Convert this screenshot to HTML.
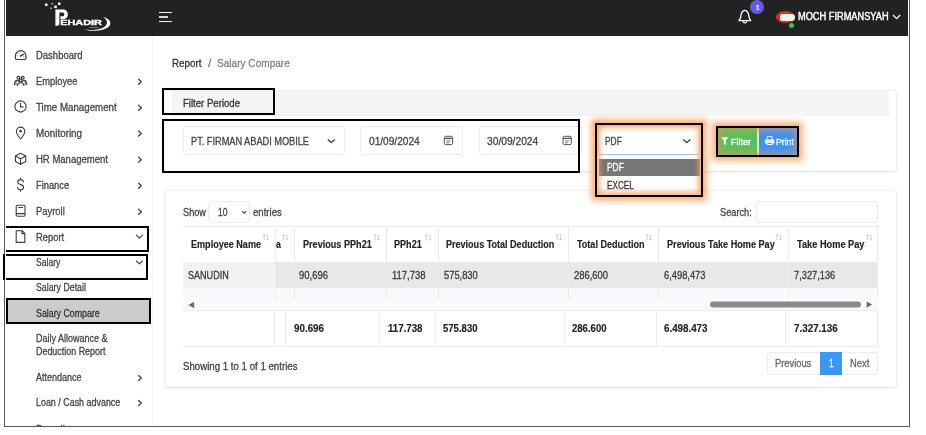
<!DOCTYPE html>
<html lang="en">
<head>
<meta charset="utf-8">
<title>Report - Salary Compare</title>
<style>
html,body{margin:0;padding:0;background:#fff;}
body{width:926px;height:435px;overflow:hidden;position:relative;font-family:"Liberation Sans",sans-serif;}
#app{position:absolute;left:0;top:0;width:926px;height:435px;overflow:hidden;will-change:transform;}
#app>*{position:absolute;box-sizing:border-box;}
.t{white-space:nowrap;height:16px;line-height:16px;transform-origin:0 50%;-webkit-text-stroke:0.28px currentColor;}
.abs{position:absolute;box-sizing:border-box;}
#app>#frame{position:absolute;left:4px;top:-1px;width:906px;height:428px;box-sizing:border-box;border:1px solid #5a5a5a;border-top:none;pointer-events:none;}
.cover{background:#fff;}
.topbar{left:6px;top:0;width:902px;height:36px;background:#222;}
.sidebar-line{left:152px;top:36px;width:1px;height:390px;background:#f4f4f4;}
.card{background:#fff;border:1px solid #f1f1f3;border-bottom-color:#e9e9ec;border-radius:3px;box-shadow:0 1px 2px rgba(0,0,0,.05);}
.inp{background:#fff;border:1px solid #ededf0;border-radius:3px;}
.hl{border:2px solid #000;}
.glow{box-shadow:0 0 6px 4px rgba(250,160,95,.82), inset 0 0 4px 4px rgba(235,145,90,.5);}
.vline{background:#ececec;width:1px;}
.hline{background:#ececec;height:1px;}
svg{position:absolute;overflow:visible;}
.glow2{box-shadow:0 0 6px 4px rgba(250,160,95,.82), inset 0 0 5px 3px rgba(248,155,90,.8);}

</style>
</head>
<body>
<div id="app">
<!-- ======= top bar ======= -->
<div class="topbar"></div>
<!-- logo -->
<svg style="left:0;top:0" width="160" height="36" viewBox="0 0 160 36">
  <g fill="#fff">
    <rect x="45" y="3.5" width="2.5" height="2.5"/>
    <rect x="51.4" y="2.8" width="1.7" height="1.7" opacity=".6"/>
    <rect x="58" y="2.5" width="2.5" height="2.5"/>
    <rect x="50.2" y="7.4" width="1.7" height="1.7" opacity=".6"/>
    <rect x="54.3" y="5.6" width="2.5" height="2.5"/>
    <path d="M55.4 9.5 H62.6 C66.2 9.5 67.8 11.6 67.8 14.4 C67.8 17.4 65.8 19.2 62.2 19.2 H60.4 V16.3 H61.8 C63.5 16.3 64.3 15.6 64.3 14.4 C64.3 13.1 63.5 12.5 61.8 12.5 H59.4 V23.2 C59.4 25 58.2 26 55.4 26 Z"/>
    <text x="60.2" y="25.1" font-family="Liberation Sans, sans-serif" font-weight="700" font-size="7.4" textLength="41.8" lengthAdjust="spacingAndGlyphs" stroke="#fff" stroke-width=".35">EHADIR</text>
    <path d="M103 16.8 C109 18.5 112.5 22.5 109 26.5 C105 30.8 92 32 84 29.6 C92 30.8 101.5 29.8 105.5 26 C108.3 23.2 107 19.5 103 16.8 Z"/>
    <rect x="89" y="27" width="10" height="0.8" opacity=".45"/>
  </g>
</svg>
<!-- hamburger -->
<div class="abs" style="left:158.7px;top:11.8px;width:13.5px;height:1.3px;background:#f2f2f2"></div>
<div class="abs" style="left:158.7px;top:16.2px;width:9.6px;height:1.6px;background:#d6d6d6"></div>
<div class="abs" style="left:158.7px;top:20.9px;width:13.5px;height:1.3px;background:#f2f2f2"></div>
<!-- bell -->
<svg style="left:736px;top:8px" width="18" height="17" viewBox="736 8 18 17">
  <path d="M739 20.6 C741.2 18.6 740.6 15.6 741.4 13.4 C742 11.5 743.2 10.3 744.85 10.3 C746.5 10.3 747.7 11.5 748.3 13.4 C749.1 15.6 748.5 18.6 750.7 20.6 Z" fill="none" stroke="#fff" stroke-width="1.3" stroke-linejoin="round"/>
  <path d="M743 21.4 C743.4 23.4 746.3 23.4 746.7 21.4" fill="none" stroke="#fff" stroke-width="1.3"/>
</svg>
<div class="abs" style="left:750.1px;top:0.2px;width:13.8px;height:13.8px;border-radius:50%;background:#645ae6"></div>
<!-- avatar -->
<div class="abs" style="left:775.8px;top:11px;width:18.8px;height:11.6px;border-radius:50%;background:#dd2a22"></div>
<div class="abs" style="left:779.5px;top:13.6px;width:15px;height:7.2px;border-radius:2px 4px 4px 2px;background:#f4f1f1"></div>
<div class="abs" style="left:788.3px;top:21.6px;width:7px;height:7px;border-radius:50%;background:#3fc253;border:1px solid #222"></div>
<!-- user chevron -->
<svg style="left:892px;top:13px" width="10" height="8" viewBox="0 0 10 8"><path d="M1 2 L4.6 5.6 L8.2 2" fill="none" stroke="#fff" stroke-width="1.2"/></svg>

<!-- ======= sidebar ======= -->
<div class="sidebar-line"></div>
<div class="abs" style="left:6px;top:298px;width:145px;height:26px;background:#cbcbcb"></div>
<!-- sidebar icons -->
<svg style="left:0;top:0" width="160" height="435" viewBox="0 0 160 435" fill="none" stroke="#3d3d3d" stroke-width="1.1" stroke-linecap="round" stroke-linejoin="round">
  <!-- dashboard gauge -->
  <path d="M15.4 56 A5.3 5.3 0 0 1 26 56 V57.9 Q26 59.5 24.4 59.5 H17 Q15.4 59.5 15.4 57.9 Z" stroke-width="1.2"/>
  <path d="M20.7 55.9 L23.5 54.4" stroke-width="1.3"/><circle cx="20.6" cy="55.9" r=".8" fill="#3d3d3d" stroke="none"/>
  <path d="M17.2 55.8 H17.9 M18.2 53.2 L18.7 53.7 M20.7 52.1 V52.8 M24.1 56.6 H23.5" stroke-width=".6" stroke="#777"/>
  <!-- employee (3 people) -->
  <circle cx="18.5" cy="77.7" r="1.4" stroke-width="1.2"/><circle cx="22.7" cy="77.7" r="1.4" stroke-width="1.2"/>
  <path d="M14.4 84.6 C14.6 81.4 15.6 80.4 17 80.4 C18.2 80.4 18.8 81 19 82"/>
  <path d="M26.8 84.6 C26.6 81.4 25.6 80.4 24.2 80.4 C23 80.4 22.4 81 22.2 82"/>
  <circle cx="20.6" cy="80.6" r="1.3"/>
  <path d="M17.4 85.4 C17.6 83.4 18.8 82.8 20.6 82.8 C22.4 82.8 23.6 83.4 23.8 85.4"/>
  <path d="M16 81 L16 84.8 M25.2 81 L25.2 84.8" stroke-width=".9"/>
  <!-- clock -->
  <circle cx="20.5" cy="106.5" r="5.6"/>
  <path d="M20.5 103.4 V106.9 H23"/>
  <!-- pin -->
  <path d="M20.6 139 C17.4 135.4 16.4 133.5 16.4 131.3 A4.2 4.2 0 0 1 24.8 131.3 C24.8 133.5 23.8 135.4 20.6 139 Z"/>
  <circle cx="20.6" cy="131.2" r=".8" fill="#3d3d3d"/>
  <!-- cube -->
  <path d="M20.55 153.2 L25.7 156 V161.6 L20.55 164.3 L15.4 161.6 V156 Z"/>
  <path d="M15.4 156 L20.55 158.8 L25.7 156 M20.55 158.8 V164.3"/>
  <!-- dollar -->
  <path d="M23.4 182 C23.2 180.4 22 179.6 20.5 179.6 C18.8 179.6 17.7 180.6 17.7 182 C17.7 185.4 23.6 183.8 23.6 187.2 C23.6 188.8 22.3 189.7 20.6 189.7 C18.8 189.7 17.6 188.8 17.5 187.2 M20.55 178 V179.6 M20.55 189.7 V191.2"/>
  <!-- payroll -->
  <rect x="16.2" y="205.2" width="8.8" height="11" rx="1.2"/>
  <path d="M18.6 207.5 H22.6 M16.4 213.6 H24.8"/>
  <!-- report file -->
  <path d="M16.2 230.7 H22.2 L24.8 233.4 V242.4 H16.2 Z M22 230.8 V233.6 H24.7"/>
  <!-- chevrons right -->
  <g stroke="#444" stroke-width="1.4">
    <path d="M138.6 79.2 L141.3 81.7 L138.6 84.2"/>
    <path d="M138.6 105.2 L141.3 107.7 L138.6 110.2"/>
    <path d="M138.6 131.1 L141.3 133.6 L138.6 136.1"/>
    <path d="M138.6 157.2 L141.3 159.7 L138.6 162.2"/>
    <path d="M138.6 183.2 L141.3 185.7 L138.6 188.2"/>
    <path d="M138.6 209.2 L141.3 211.7 L138.6 214.2"/>
    <path d="M138.6 375.6 L141.3 378.1 L138.6 380.6"/>
    <path d="M138.6 400.6 L141.3 403.1 L138.6 405.6"/>
    <!-- chevrons down -->
    <path d="M136.4 235.2 L139.4 238.1 L142.4 235.2" stroke-width="1.15"/>
    <path d="M136.4 261 L139.4 263.9 L142.4 261" stroke-width="1.15"/>
  </g>
</svg>

<!-- ======= main: card 1 ======= -->
<div class="card" style="left:164px;top:90px;width:733px;height:82px"></div>
<div class="abs" style="left:172px;top:90.5px;width:716.5px;height:25px;background:#f5f5f5"></div>
<div class="inp" style="left:182.5px;top:126px;width:162px;height:29px"></div>
<div class="inp" style="left:360px;top:126px;width:103px;height:29px"></div>
<div class="inp" style="left:478.8px;top:126px;width:103px;height:29px"></div>
<div class="inp" style="left:598px;top:126px;width:101.8px;height:29px;border-color:#e4e8f0;border-bottom-color:#9fc3f5"></div>
<!-- dropdown list -->
<div class="abs" style="left:598.8px;top:158.7px;width:100.8px;height:31.5px;background:#fff"></div>
<div class="abs" style="left:598.8px;top:158.7px;width:100.8px;height:17px;background:#767676"></div>
<!-- select chevrons + calendar icons -->
<svg style="left:0;top:0" width="926" height="435" viewBox="0 0 926 435" fill="none" stroke="#444" stroke-width="1.1">
  <path d="M327.8 139.4 L331.3 142.6 L334.8 139.4" stroke-width="1.3"/>
  <path d="M683.2 139.4 L686.8 142.6 L690.4 139.4" stroke-width="1.3"/>
  <g stroke="#555" stroke-width="1">
    <rect x="444.3" y="136.3" width="8.3" height="8.3" rx="1.3"/><path d="M444.3 138.4 H452.6" stroke-width="1.4"/><path d="M446.3 141 H450.6 M446.3 142.8 H449" stroke-width=".8"/>
    <rect x="563" y="136.3" width="8.3" height="8.3" rx="1.3"/><path d="M563 138.4 H571.3" stroke-width="1.4"/><path d="M565 141 H569.3 M565 142.8 H567.7" stroke-width=".8"/>
  </g>
</svg>
<!-- buttons -->
<div class="abs" style="left:718px;top:128px;width:39.2px;height:27px;background:#58c15d"></div>
<div class="abs" style="left:757.2px;top:128px;width:2.2px;height:27px;background:#fde6d2"></div>
<div class="abs" style="left:759.4px;top:128px;width:37.6px;height:27px;background:#3b93f7"></div>
<svg style="left:0;top:0" width="926" height="435" viewBox="0 0 926 435" fill="#fff" stroke="none">
  <path d="M721.2 137.2 H728.4 L725.8 140.6 V145.2 L723.8 143.8 V140.6 Z"/>
  <path d="M766.8 136.2 H772.4 V139.2 H766.8 Z M767.7 137.1 V139.2 H771.5 V137.1 Z M764.9 139.4 H774.3 V143.4 H772.6 V141.8 H766.6 V143.4 H764.9 Z M766.6 142 H772.6 V145 H766.6 Z M767.6 142.9 V144.1 H771.6 V142.9 Z" fill-rule="evenodd"/>
</svg>

<!-- ======= main: card 2 ======= -->
<div class="card" style="left:164px;top:190px;width:733px;height:198px"></div>
<div class="inp" style="left:208.3px;top:201.3px;width:42.2px;height:21.3px"></div>
<div class="inp" style="left:756px;top:201.3px;width:121.8px;height:21.3px"></div>
<!-- table -->
<div class="abs" style="left:182.5px;top:261.8px;width:92.5px;height:26.3px;background:#f1f1f1"></div>
<div class="abs" style="left:275px;top:261.8px;width:602.8px;height:26.3px;background:#e8e8e8"></div>
<div class="abs" style="left:182.5px;top:288.1px;width:695.3px;height:11px;background:#f8f9fb"></div>
<div class="abs" style="left:182.5px;top:299.1px;width:695.3px;height:11.2px;background:#fafafa"></div>
<div class="abs hline" style="left:182.5px;top:226.2px;width:695.3px"></div>
<div class="abs hline" style="left:182.5px;top:310.3px;width:695.3px"></div>
<div class="abs hline" style="left:182.5px;top:345.6px;width:695.3px"></div>
<!-- header/body column lines -->
<div class="abs vline" style="left:275px;top:226.2px;height:73px"></div>
<div class="abs vline" style="left:294px;top:226.2px;height:73px"></div>
<div class="abs vline" style="left:386px;top:226.2px;height:73px"></div>
<div class="abs vline" style="left:438px;top:226.2px;height:73px"></div>
<div class="abs vline" style="left:568.4px;top:226.2px;height:73px"></div>
<div class="abs vline" style="left:658px;top:226.2px;height:73px"></div>
<div class="abs vline" style="left:788px;top:226.2px;height:73px"></div>
<div class="abs vline" style="left:877.4px;top:226.2px;height:73px"></div>
<!-- footer column lines -->
<div class="abs vline" style="left:273.6px;top:310.3px;height:35.4px"></div>
<div class="abs vline" style="left:285px;top:310.3px;height:35.4px"></div>
<div class="abs vline" style="left:378.6px;top:310.3px;height:35.4px"></div>
<div class="abs vline" style="left:435.4px;top:310.3px;height:35.4px"></div>
<div class="abs vline" style="left:564.4px;top:310.3px;height:35.4px"></div>
<div class="abs vline" style="left:656.2px;top:310.3px;height:35.4px"></div>
<div class="abs vline" style="left:785.2px;top:310.3px;height:35.4px"></div>
<div class="abs vline" style="left:877.4px;top:310.3px;height:35.4px"></div>
<!-- sort icons + scrollbar -->
<svg style="left:0;top:0" width="926" height="435" viewBox="0 0 926 435" fill="none" stroke="#c4c4c4" stroke-width=".8">
  <path transform="translate(264.2 233.8)" d="M0 6.4 V0.6 M-1.3 2 L0 0.6 L1.3 2 M3.4 0.6 V6.4 M2.1 5 L3.4 6.4 L4.7 5"/>
  <path transform="translate(283.6 233.8)" d="M0 6.4 V0.6 M-1.3 2 L0 0.6 L1.3 2 M3.4 0.6 V6.4 M2.1 5 L3.4 6.4 L4.7 5"/>
  <path transform="translate(375 233.8)" d="M0 6.4 V0.6 M-1.3 2 L0 0.6 L1.3 2 M3.4 0.6 V6.4 M2.1 5 L3.4 6.4 L4.7 5"/>
  <path transform="translate(426.6 233.8)" d="M0 6.4 V0.6 M-1.3 2 L0 0.6 L1.3 2 M3.4 0.6 V6.4 M2.1 5 L3.4 6.4 L4.7 5"/>
  <path transform="translate(557.2 233.8)" d="M0 6.4 V0.6 M-1.3 2 L0 0.6 L1.3 2 M3.4 0.6 V6.4 M2.1 5 L3.4 6.4 L4.7 5"/>
  <path transform="translate(647 233.8)" d="M0 6.4 V0.6 M-1.3 2 L0 0.6 L1.3 2 M3.4 0.6 V6.4 M2.1 5 L3.4 6.4 L4.7 5"/>
  <path transform="translate(777 233.8)" d="M0 6.4 V0.6 M-1.3 2 L0 0.6 L1.3 2 M3.4 0.6 V6.4 M2.1 5 L3.4 6.4 L4.7 5"/>
  <path transform="translate(867.6 233.8)" d="M0 6.4 V0.6 M-1.3 2 L0 0.6 L1.3 2 M3.4 0.6 V6.4 M2.1 5 L3.4 6.4 L4.7 5"/>
  <path d="M242 211.2 L244.1 213.2 L246.2 211.2" stroke="#444" stroke-width="1.1"/>
  <path d="M188.4 305 L194.2 301.8 V308.2 Z" fill="#6b6b6b" stroke="none"/>
  <path d="M872.2 304.6 L866.6 301.4 V307.8 Z" fill="#6b6b6b" stroke="none"/>
  <rect x="710" y="301.6" width="151" height="6" rx="3" fill="#8a8a8a" stroke="none"/>
</svg>
<!-- pagination -->
<div class="inp" style="left:766.5px;top:351.8px;width:111px;height:23.6px"></div>
<div class="abs" style="left:819.5px;top:351.8px;width:22px;height:23.6px;background:#3b97f7"></div>


<span class="t" style="left:35.80px;top:47.90px;font-size:10px;font-weight:400;color:#454545;transform:scaleX(0.9485);">Dashboard</span>
<span class="t" style="left:35.80px;top:73.90px;font-size:10px;font-weight:400;color:#454545;transform:scaleX(0.9310);">Employee</span>
<span class="t" style="left:35.80px;top:99.90px;font-size:10px;font-weight:400;color:#454545;transform:scaleX(0.9723);">Time Management</span>
<span class="t" style="left:35.80px;top:125.70px;font-size:10px;font-weight:400;color:#454545;transform:scaleX(0.9871);">Monitoring</span>
<span class="t" style="left:35.80px;top:151.90px;font-size:10px;font-weight:400;color:#454545;transform:scaleX(0.9511);">HR Management</span>
<span class="t" style="left:35.80px;top:177.90px;font-size:10px;font-weight:400;color:#454545;transform:scaleX(0.9303);">Finance</span>
<span class="t" style="left:35.80px;top:203.90px;font-size:10px;font-weight:400;color:#454545;transform:scaleX(0.9418);">Payroll</span>
<span class="t" style="left:35.80px;top:229.90px;font-size:10px;font-weight:400;color:#454545;transform:scaleX(0.9362);">Report</span>
<span class="t" style="left:35.80px;top:255.40px;font-size:10px;font-weight:400;color:#454545;transform:scaleX(0.8569);">Salary</span>
<span class="t" style="left:35.80px;top:280.40px;font-size:10px;font-weight:400;color:#454545;transform:scaleX(0.8800);">Salary Detail</span>
<span class="t" style="left:35.80px;top:305.90px;font-size:10px;font-weight:400;color:#333;transform:scaleX(0.8815);">Salary Compare</span>
<span class="t" style="left:35.80px;top:330.90px;font-size:10px;font-weight:400;color:#454545;transform:scaleX(0.8983);">Daily Allowance &amp;</span>
<span class="t" style="left:35.80px;top:344.40px;font-size:10px;font-weight:400;color:#454545;transform:scaleX(0.8917);">Deduction Report</span>
<span class="t" style="left:35.80px;top:370.20px;font-size:10px;font-weight:400;color:#454545;transform:scaleX(0.9010);">Attendance</span>
<span class="t" style="left:35.80px;top:395.20px;font-size:10px;font-weight:400;color:#454545;transform:scaleX(0.8914);">Loan / Cash advance</span>
<span class="t" style="left:35.80px;top:422.40px;font-size:10px;font-weight:400;color:#454545;transform:scaleX(0.9418);">Payroll</span>
<span class="t" style="left:797.90px;top:8.70px;font-size:10px;font-weight:400;color:#fff;transform:scaleX(0.9230);-webkit-text-stroke:0.4px #fff;">MOCH FIRMANSYAH</span>
<span class="t" style="left:172.10px;top:54.90px;font-size:11px;font-weight:400;color:#303030;transform:scaleX(0.8961);">Report</span>
<span class="t" style="left:208.40px;top:54.90px;font-size:11px;font-weight:400;color:#7e8189;transform:scaleX(1.0776);">/</span>
<span class="t" style="left:217.40px;top:54.90px;font-size:11px;font-weight:400;color:#7e8189;transform:scaleX(0.9159);">Salary Compare</span>
<span class="t" style="left:182.50px;top:95.90px;font-size:10px;font-weight:400;color:#333;transform:scaleX(0.9585);">Filter Periode</span>
<span class="t" style="left:190.75px;top:133.50px;font-size:10px;font-weight:400;color:#444;transform:scaleX(0.9193);">PT. FIRMAN ABADI MOBILE</span>
<span class="t" style="left:368.75px;top:133.50px;font-size:10px;font-weight:400;color:#444;transform:scaleX(1.0137);">01/09/2024</span>
<span class="t" style="left:486.75px;top:133.50px;font-size:10px;font-weight:400;color:#444;transform:scaleX(1.0237);">30/09/2024</span>
<span class="t" style="left:605.30px;top:133.50px;font-size:10px;font-weight:400;color:#444;transform:scaleX(0.8375);">PDF</span>
<span class="t" style="left:606.50px;top:160.20px;font-size:10px;font-weight:400;color:#fff;transform:scaleX(0.8375);">PDF</span>
<span class="t" style="left:606.50px;top:177.70px;font-size:10px;font-weight:400;color:#333;transform:scaleX(0.8200);">EXCEL</span>
<span class="t" style="left:731.00px;top:133.80px;font-size:9.3px;font-weight:400;color:#fff;transform:scaleX(0.9675);-webkit-text-stroke:0.35px #fff;">Filter</span>
<span class="t" style="left:776.20px;top:133.80px;font-size:9.3px;font-weight:400;color:#fff;transform:scaleX(0.9307);-webkit-text-stroke:0.35px #fff;">Print</span>
<span class="t" style="left:182.50px;top:204.90px;font-size:10px;font-weight:400;color:#444;transform:scaleX(0.9194);">Show</span>
<span class="t" style="left:217.50px;top:204.90px;font-size:10px;font-weight:400;color:#444;transform:scaleX(0.8539);">10</span>
<span class="t" style="left:253.00px;top:204.90px;font-size:10px;font-weight:400;color:#444;transform:scaleX(0.9578);">entries</span>
<span class="t" style="left:719.75px;top:204.90px;font-size:10px;font-weight:400;color:#444;transform:scaleX(0.9211);">Search:</span>
<span class="t" style="left:190.75px;top:237.30px;font-size:10px;font-weight:700;color:#222;transform:scaleX(0.9060);-webkit-text-stroke:0.15px currentColor;">Employee Name</span>
<span class="t" style="left:275.75px;top:237.30px;font-size:10px;font-weight:700;color:#222;transform:scaleX(0.8809);-webkit-text-stroke:0.15px currentColor;">a</span>
<span class="t" style="left:302.50px;top:237.30px;font-size:10px;font-weight:700;color:#222;transform:scaleX(0.9095);-webkit-text-stroke:0.15px currentColor;">Previous PPh21</span>
<span class="t" style="left:394.25px;top:237.30px;font-size:10px;font-weight:700;color:#222;transform:scaleX(0.9075);-webkit-text-stroke:0.15px currentColor;">PPh21</span>
<span class="t" style="left:446.25px;top:237.30px;font-size:10px;font-weight:700;color:#222;transform:scaleX(0.9033);-webkit-text-stroke:0.15px currentColor;">Previous Total Deduction</span>
<span class="t" style="left:577.00px;top:237.30px;font-size:10px;font-weight:700;color:#222;transform:scaleX(0.9023);-webkit-text-stroke:0.15px currentColor;">Total Deduction</span>
<span class="t" style="left:666.75px;top:237.30px;font-size:10px;font-weight:700;color:#222;transform:scaleX(0.9116);-webkit-text-stroke:0.15px currentColor;">Previous Take Home Pay</span>
<span class="t" style="left:796.50px;top:237.30px;font-size:10px;font-weight:700;color:#222;transform:scaleX(0.9223);-webkit-text-stroke:0.15px currentColor;">Take Home Pay</span>
<span class="t" style="left:187.50px;top:268.10px;font-size:10px;font-weight:400;color:#3a3a3a;transform:scaleX(0.9052);">SANUDIN</span>
<span class="t" style="left:299.25px;top:268.10px;font-size:10px;font-weight:400;color:#3a3a3a;transform:scaleX(0.9479);">90,696</span>
<span class="t" style="left:392.00px;top:268.10px;font-size:10px;font-weight:400;color:#3a3a3a;transform:scaleX(0.9462);">117,738</span>
<span class="t" style="left:444.25px;top:268.10px;font-size:10px;font-weight:400;color:#3a3a3a;transform:scaleX(0.9334);">575,830</span>
<span class="t" style="left:574.25px;top:268.10px;font-size:10px;font-weight:400;color:#3a3a3a;transform:scaleX(0.9404);">286,600</span>
<span class="t" style="left:664.25px;top:268.10px;font-size:10px;font-weight:400;color:#3a3a3a;transform:scaleX(0.9326);">6,498,473</span>
<span class="t" style="left:794.00px;top:268.10px;font-size:10px;font-weight:400;color:#3a3a3a;transform:scaleX(0.9270);">7,327,136</span>
<span class="t" style="left:293.75px;top:321.00px;font-size:10px;font-weight:700;color:#222;transform:scaleX(0.9806);-webkit-text-stroke:0.15px currentColor;">90.696</span>
<span class="t" style="left:387.50px;top:321.00px;font-size:10px;font-weight:700;color:#222;transform:scaleX(0.9688);-webkit-text-stroke:0.15px currentColor;">117.738</span>
<span class="t" style="left:442.50px;top:321.00px;font-size:10px;font-weight:700;color:#222;transform:scaleX(0.9542);-webkit-text-stroke:0.15px currentColor;">575.830</span>
<span class="t" style="left:571.50px;top:321.00px;font-size:10px;font-weight:700;color:#222;transform:scaleX(0.9542);-webkit-text-stroke:0.15px currentColor;">286.600</span>
<span class="t" style="left:664.00px;top:321.00px;font-size:10px;font-weight:700;color:#222;transform:scaleX(0.9775);-webkit-text-stroke:0.15px currentColor;">6.498.473</span>
<span class="t" style="left:794.00px;top:321.00px;font-size:10px;font-weight:700;color:#222;transform:scaleX(0.9831);-webkit-text-stroke:0.15px currentColor;">7.327.136</span>
<span class="t" style="left:182.50px;top:359.20px;font-size:10px;font-weight:400;color:#444;transform:scaleX(0.9669);">Showing 1 to 1 of 1 entries</span>
<span class="t" style="left:775.25px;top:355.90px;font-size:10px;font-weight:400;color:#666;transform:scaleX(0.9317);">Previous</span>
<span class="t" style="left:828.70px;top:355.90px;font-size:10px;font-weight:400;color:#fff;transform:scaleX(0.8200);">1</span>
<span class="t" style="left:849.75px;top:355.90px;font-size:10px;font-weight:400;color:#666;transform:scaleX(0.9362);">Next</span>
<span class="t" style="left:755.50px;top:0.10px;font-size:7.5px;font-weight:700;color:#fff;transform:scaleX(0.8200);-webkit-text-stroke:0.15px currentColor;">1</span>
<!-- ======= covers (outside frame) ======= -->
<div class="cover" style="left:0;top:427px;width:926px;height:8px"></div>
<div class="cover" style="left:0;top:0;width:4px;height:435px"></div>
<div class="cover" style="left:910px;top:0;width:16px;height:435px"></div>

<div id="frame"></div>
<!-- ======= highlight boxes ======= -->
<div class="hl" style="left:162px;top:88px;width:113px;height:27px"></div>
<div class="hl" style="left:162px;top:119px;width:418px;height:54px"></div>
<div class="hl glow2" style="left:595px;top:123px;width:108px;height:74px"></div>
<div class="hl glow" style="left:716px;top:126px;width:83px;height:31px"></div>
<div class="hl" style="left:6px;top:226px;width:143px;height:26px;border-left:none"></div>
<div class="hl" style="left:3px;top:254px;width:145px;height:26px"></div>
<div class="abs" style="left:5px;top:254px;width:1px;height:2px;background:#fff"></div>
<div class="abs" style="left:5px;top:278px;width:1px;height:2px;background:#fff"></div>
<div class="hl" style="left:6px;top:298px;width:145px;height:26px"></div>

</div>
</body>
</html>
